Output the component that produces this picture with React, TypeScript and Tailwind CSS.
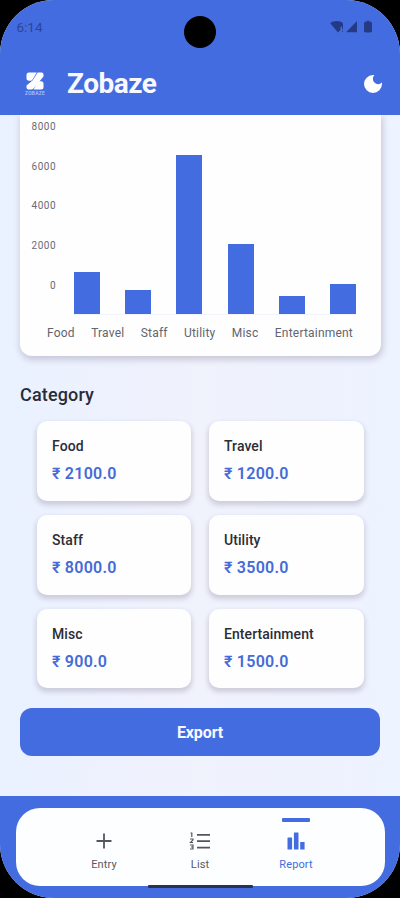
import React from "react";

const bars = [
  { id: 1, height: "h-[42px]" },
  { id: 2, height: "h-[24px]" },
  { id: 3, height: "h-[159px]" },
  { id: 4, height: "h-[70px]" },
  { id: 5, height: "h-[18px]" },
  { id: 6, height: "h-[30px]" },
];

const ticks = ["8000", "6000", "4000", "2000", "0"];

const categories = [
  { name: "Food", amount: "2100.0" },
  { name: "Travel", amount: "1200.0" },
  { name: "Staff", amount: "8000.0" },
  { name: "Utility", amount: "3500.0" },
  { name: "Misc", amount: "900.0" },
  { name: "Entertainment", amount: "1500.0" },
];

function StatusBar() {
  return (
    <div className="flex h-[54px] items-start justify-between pl-[16.500px] pr-[26px] pt-[17px] text-[#253a85]">
      <span className="text-[13.500px] leading-[20px] text-[#2d4590]">6:14</span>
      <svg width="44" height="14" viewBox="0 0 44 14" className="mt-[3px]" fill="currentColor">
        <path d="M0.200 3.200C3 .3 10.500 .3 12.800 3V6L10.500 7V10L8 12.500Z" />
        <path d="M12.500 4v5M12.500 10.500v1.300" stroke="currentColor" strokeWidth="1" />
        <path d="M16 12.300 27 1V12.300Z" />
        <path d="M36.500 .8h3v1h1q1.500 0 1.500 1.500v7.500q0 1.800-1.500 1.800h-5q-1.500 0-1.500-1.800v-7.500q0-1.500 1.500-1.500h1Z" />
      </svg>
    </div>
  );
}

function Logo() {
  return (
    <div className="flex w-[22px] flex-col items-center">
      <svg width="18" height="18" viewBox="0 0 18 18" fill="white">
        <path d="M3 .5H10.800L6.500 7.500Q5.700 8.700 4.500 8.700H3Q.5 8.700.5 6V3Q.5.5 3 .5Z" />
        <path d="M11.700 .5H15.500Q17.500.5 17.500 2.500V4.500L8 16Q6.800 17.500 5 17.500H2.500Q.5 17.500.5 15.500V13.500L6.500 8.400Z" />
        <path d="M13.500 9.300H15Q17.500 9.300 17.500 12V15Q17.500 17.500 15 17.500H7.600L11.500 10.500Q12.200 9.300 13.500 9.300Z" />
      </svg>
      <span className="mt-[1px] text-[5px] font-medium leading-[5px] tracking-[0.2px] text-[#b5c4f5]">ZOBAZE</span>
    </div>
  );
}

function Header() {
  return (
    <header className="relative h-[115px] bg-[#446ce1]">
      <StatusBar />
      <div className="absolute left-[184px] top-[16px] size-[32px] rounded-full bg-black" />
      <div className="flex h-[60px] items-center pl-[24px] pr-[17px]">
        <Logo />
        <h1 className="ml-[21px] text-[28px] font-bold leading-[36px] tracking-[-0.5px] text-[#f8f9ff]">Zobaze</h1>
        <svg className="ml-auto" width="20" height="20" viewBox="0 0 20 20" fill="white">
          <path d="M10 1A9 9 0 1 0 19 10Q19 9.300 18.900 8.600A5.300 5.300 0 1 1 11.400 1.100Q10.700 1 10 1Z" />
        </svg>
      </div>
    </header>
  );
}

function Chart() {
  return (
    <section className="mx-[20px] h-[241px] w-[361px] rounded-b-[12px] bg-[#fefeff] shadow-[1px_3px_6px_1px_rgba(75,55,85,0.22)]">
      <div className="flex h-[200px]">
        <div className="flex w-[36px] flex-col pt-[2px] text-right text-[10px] leading-[20px] tracking-[0.5px] text-[#686b74]">
          {ticks.map((t) => (
            <span key={t} className="mb-[19.700px]">{t}</span>
          ))}
        </div>
        <div className="ml-[18px] flex w-[282px] items-end justify-between border-b border-[#f1f4fc]">
          {bars.map((b) => (
            <div key={b.id} className={"w-[26px] bg-[#446ce1] " + b.height} />
          ))}
        </div>
      </div>
      <div className="flex w-[333px] justify-between pl-[27px] pt-[8px] text-[12px] leading-[20px] tracking-[0.2px] text-[#62656e]">
        {categories.map((c) => (
          <span key={c.name}>{c.name}</span>
        ))}
      </div>
    </section>
  );
}

function BottomNav() {
  return (
    <nav className="relative h-[102px] bg-[#446ce1] px-[15.500px] pt-[12px]">
      <div className="flex h-[78px] justify-center rounded-[24px] bg-[#fdfeff] text-[11px] leading-[16px] tracking-[0.1px] text-[#565961]">
        <div className="flex w-[96px] flex-col items-center pt-[23.500px]">
          <svg width="18" height="18" viewBox="0 0 18 18" fill="none" stroke="#54565e" strokeWidth="1.800">
            <path d="M9 1.500v15M1.500 9h15" />
          </svg>
          <span className="mt-[7px]">Entry</span>
        </div>
        <div className="flex w-[96px] flex-col items-center pt-[23.500px]">
          <svg width="22" height="18" viewBox="0 0 22 18" fill="none" stroke="#54565e">
            <path d="M8 2.800h13M8 9.200h13M8 15.600h13" strokeWidth="1.800" />
            <path d="M1.500 1h1.300v4M1 7h3v.8L1.500 10.500H4M1 13h3v4H1M2 15h2" strokeWidth="1.200" />
          </svg>
          <span className="mt-[7px]">List</span>
        </div>
        <div className="flex w-[96px] flex-col items-center pt-[10px] text-[#446ce1]">
          <div className="h-[4px] w-[28px] rounded-[1px] bg-[#446ce1]" />
          <svg className="mt-[9.500px]" width="18" height="18" viewBox="0 0 18 18" fill="currentColor">
            <rect x=".5" y="5.500" width="4.600" height="12" rx=".5" />
            <rect x="6.900" y=".5" width="4.600" height="17" rx=".5" />
            <rect x="13.200" y="10" width="4.400" height="7.500" rx=".5" />
          </svg>
          <span className="mt-[7px]">Report</span>
        </div>
      </div>
      <div className="absolute left-[148px] top-[88.500px] h-[3.500px] w-[105px] rounded-[1px] bg-[#28344f]" />
    </nav>
  );
}

export default function App() {
  return (
    <div className="h-[898px] w-[400px] overflow-hidden bg-black font-[Roboto,sans-serif]">
      <div className="flex h-[898px] flex-col overflow-hidden rounded-[54px] bg-[#edf2fe]">
        <Header />
        <main className="h-[681px] overflow-hidden bg-linear-to-r from-[#eaf1ff] via-[#f0f2fc] to-[#edf3ff]">
          <Chart />
          <h2 className="ml-[20px] mt-[27px] text-[18px] font-medium leading-[24px] tracking-[0.15px] text-[#292b37]">Category</h2>
          <div className="mx-[37px] mt-[14px] grid grid-cols-[154px_155px] gap-x-[18px] gap-y-[14px]">
            {categories.map((c) => (
              <article key={c.name} className="h-[79.800px] rounded-[10px] bg-[#fefeff] pl-[15px] pt-[15px] shadow-[0px_3px_5px_1px_rgba(75,55,85,0.2)]">
                <div className="text-[14px] font-medium leading-[20px] tracking-[0.07px] text-[#2c2d35]">{c.name}</div>
                <div className="mt-[7px] text-[16px] font-semibold leading-[22px] tracking-[0.25px] text-[#446bd7]">₹ {c.amount}</div>
              </article>
            ))}
          </div>
          <button className="mx-[20px] mt-[19.500px] block h-[48.500px] w-[360px] rounded-[12px] bg-[#446ce1] pt-[1px] text-[16px] font-bold leading-[22px] tracking-[-0.1px] text-[#f8f9ff]">
            Export
          </button>
        </main>
        <BottomNav />
      </div>
    </div>
  );
}
